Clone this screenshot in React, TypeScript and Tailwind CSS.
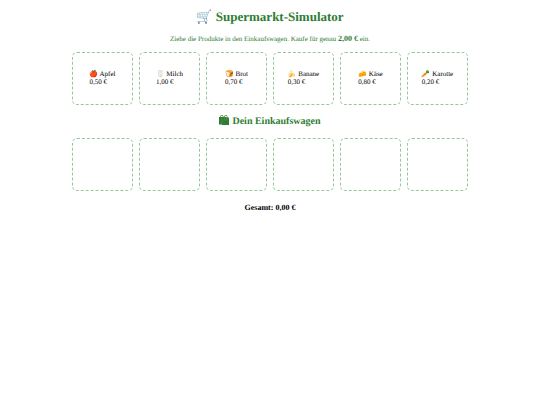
const products = [
  { emoji: '🍎', name: 'Apfel', price: '0,50 €' },
  { emoji: '🥛', name: 'Milch', price: '1,00 €' },
  { emoji: '🍞', name: 'Brot', price: '0,70 €' },
  { emoji: '🍌', name: 'Banane', price: '0,30 €' },
  { emoji: '🧀', name: 'Käse', price: '0,80 €' },
  { emoji: '🥕', name: 'Karotte', price: '0,20 €' },
]

const slot =
  'flex h-[53px] w-[61px] items-center justify-center rounded-[5px] border border-dashed border-[#95c898] pb-[2px]'

const BagsIcon = () => (
  <svg viewBox="0 0 20 20" className="h-[10px] w-[10px]" fill="#2e7d32" aria-hidden="true">
    <path d="M0 4h14v15H0z" />
    <path d="M6 5h14v15H6z" />
    <path d="M3 5V3a2 2 0 0 1 5 0v2M11 6V3a2.500 2.500 0 0 1 5 0v3" fill="none" stroke="#2e7d32" strokeWidth="1.600" />
    <path d="M6 6v12M11 6v2a2.500 2.500 0 0 0 5 0V6" fill="none" stroke="#6fa872" strokeWidth="0.800" />
  </svg>
)

export default function App() {
  return (
    <main className="bg-white px-4 pt-2 text-center font-['Liberation_Serif',serif] text-black [text-rendering:geometricPrecision]">
      <h1 className="text-[13px] leading-[18px] font-bold text-[#2e7d32]">🛒 Supermarkt-Simulator</h1>
      <p className="mt-2 text-[7px] leading-[10px] text-[#2e7d32]">
        Ziehe die Produkte in den Einkaufswagen. Kaufe für genau <strong className="text-[8px]">2,00 €</strong> ein.
      </p>
      <div className="mt-2 flex flex-wrap justify-center gap-[6px]">
        {products.map((p) => (
          <div key={p.name} className={slot}>
            <div className="text-left text-[7px] leading-[8px]">
              {p.emoji} {p.name}
              <br />
              {p.price}
            </div>
          </div>
        ))}
      </div>
      <h2 className="mt-2 flex items-start justify-center gap-[3px] text-[10px] leading-[18px] font-bold text-[#2e7d32]">
        <span className="pt-[2px]">
          <BagsIcon />
        </span>
        Dein Einkaufswagen
      </h2>
      <div className="mt-[7px] flex flex-wrap justify-center gap-[6px]">
        {products.map((p) => (
          <div key={p.name} className={slot} />
        ))}
      </div>
      <p className="mt-3 text-[8px] leading-[10px] font-bold">Gesamt: 0,00 €</p>
    </main>
  )
}
